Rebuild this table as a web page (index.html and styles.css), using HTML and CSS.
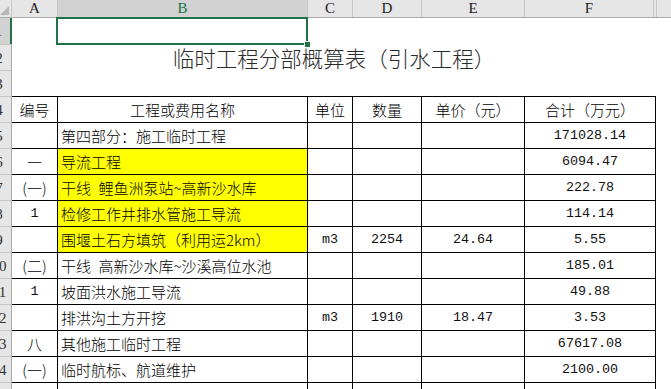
FILE: index.html
```html
<!DOCTYPE html>
<html lang="zh-CN">
<head>
<meta charset="utf-8">
<title>临时工程分部概算表</title>
<link rel="stylesheet" href="styles.css">
</head>
<body>
<div class="sheet">
  <div class="hdr">
    <div class="corner"><svg width="11" height="17" viewBox="0 0 11 17"><polygon points="9,6 9,15 0,15" fill="#b8b8b8"/></svg></div>
    <div class="ch wa">A</div>
    <div class="ch wb on">B</div>
    <div class="ch wc">C</div>
    <div class="ch wd">D</div>
    <div class="ch we">E</div>
    <div class="ch wfh">F</div>
    <div class="ch wg"></div>
    <div class="ch rest"></div>
  </div>

  <div class="row">
    <div class="rh first on"><span>1</span></div>
    <div class="c wa"></div>
    <div class="c wb cur"><div class="selbox"></div><i class="handle"></i></div>
  </div>
  <div class="row">
    <div class="rh"><span>2</span></div>
    <div class="title">临时工程分部概算表（引水工程）</div>
  </div>
  <div class="row">
    <div class="rh"><span>3</span></div>
  </div>

  <div class="row t">
    <div class="rh"><span>4</span></div>
    <div class="c wa ctr">编号</div>
    <div class="c wb ctr">工程或费用名称</div>
    <div class="c wc ctr">单位</div>
    <div class="c wd ctr">数量</div>
    <div class="c we ctr">单价（元）</div>
    <div class="c wf ctr">合计（万元）</div>
  </div>
  <div class="row t">
    <div class="rh"><span>5</span></div>
    <div class="c wa ctr"></div>
    <div class="c wb">第四部分：施工临时工程</div>
    <div class="c wc ctr"></div>
    <div class="c wd ctr"></div>
    <div class="c we ctr"></div>
    <div class="c wf ctr n">171028.14</div>
  </div>
  <div class="row t">
    <div class="rh"><span>6</span></div>
    <div class="c wa ctr">一</div>
    <div class="c wb y">导流工程</div>
    <div class="c wc ctr"></div>
    <div class="c wd ctr"></div>
    <div class="c we ctr"></div>
    <div class="c wf ctr n">6094.47</div>
  </div>
  <div class="row t">
    <div class="rh"><span>7</span></div>
    <div class="c wa ctr">(一)</div>
    <div class="c wb y">干线&ensp;鲤鱼洲泵站~高新沙水库</div>
    <div class="c wc ctr"></div>
    <div class="c wd ctr"></div>
    <div class="c we ctr"></div>
    <div class="c wf ctr n">222.78</div>
  </div>
  <div class="row t">
    <div class="rh"><span>8</span></div>
    <div class="c wa ctr n">1</div>
    <div class="c wb y">检修工作井排水管施工导流</div>
    <div class="c wc ctr"></div>
    <div class="c wd ctr"></div>
    <div class="c we ctr"></div>
    <div class="c wf ctr n">114.14</div>
  </div>
  <div class="row t">
    <div class="rh"><span>9</span></div>
    <div class="c wa ctr"></div>
    <div class="c wb y">围堰土石方填筑（利用运2km）</div>
    <div class="c wc ctr n">m3</div>
    <div class="c wd ctr n">2254</div>
    <div class="c we ctr n">24.64</div>
    <div class="c wf ctr n">5.55</div>
  </div>
  <div class="row t">
    <div class="rh"><span>10</span></div>
    <div class="c wa ctr">(二)</div>
    <div class="c wb">干线&ensp;高新沙水库~沙溪高位水池</div>
    <div class="c wc ctr"></div>
    <div class="c wd ctr"></div>
    <div class="c we ctr"></div>
    <div class="c wf ctr n">185.01</div>
  </div>
  <div class="row t">
    <div class="rh"><span>11</span></div>
    <div class="c wa ctr n">1</div>
    <div class="c wb">坡面洪水施工导流</div>
    <div class="c wc ctr"></div>
    <div class="c wd ctr"></div>
    <div class="c we ctr"></div>
    <div class="c wf ctr n">49.88</div>
  </div>
  <div class="row t">
    <div class="rh"><span>12</span></div>
    <div class="c wa ctr"></div>
    <div class="c wb">排洪沟土方开挖</div>
    <div class="c wc ctr n">m3</div>
    <div class="c wd ctr n">1910</div>
    <div class="c we ctr n">18.47</div>
    <div class="c wf ctr n">3.53</div>
  </div>
  <div class="row t">
    <div class="rh"><span>13</span></div>
    <div class="c wa ctr">八</div>
    <div class="c wb">其他施工临时工程</div>
    <div class="c wc ctr"></div>
    <div class="c wd ctr"></div>
    <div class="c we ctr"></div>
    <div class="c wf ctr n">67617.08</div>
  </div>
  <div class="row t">
    <div class="rh"><span>14</span></div>
    <div class="c wa ctr">(一)</div>
    <div class="c wb">临时航标、航道维护</div>
    <div class="c wc ctr"></div>
    <div class="c wd ctr"></div>
    <div class="c we ctr"></div>
    <div class="c wf ctr n">2100.00</div>
  </div>
  <div class="row t">
    <div class="rh"><span>15</span></div>
    <div class="c wa ctr"></div>
    <div class="c wb"></div>
    <div class="c wc ctr"></div>
    <div class="c wd ctr"></div>
    <div class="c we ctr"></div>
    <div class="c wf ctr"></div>
  </div>
</div>
</body>
</html>
```

FILE: styles.css
```css
html, body {
  margin: 0;
  padding: 0;
  background: #fff;
}
body {
  width: 671px;
  height: 389px;
  overflow: hidden;
  font-family: "Noto Sans CJK SC", sans-serif;
  color: #000;
}
.sheet {
  display: flex;
  flex-direction: column;
  width: 700px;
}

/* column widths */
.wa { width: 46px; }
.wb { width: 250px; }
.wc { width: 45px; }
.wd { width: 69px; }
.we { width: 103px; }
.wf { width: 131px; }
.wfh { width: 129px; }
.wg { width: 3px; }
.rest { flex: 1; }

/* column header */
.hdr {
  display: flex;
  height: 18px;
  box-sizing: border-box;
  background: #e6e6e6;
  border-bottom: 1px solid #ababab;
}
.corner {
  width: 12px;
  flex-shrink: 0;
  box-sizing: border-box;
  border-right: 1px solid #c6c6c6;
  display: flex;
}
.ch {
  flex-shrink: 0;
  box-sizing: border-box;
  border-right: 1px solid #c6c6c6;
  display: flex;
  align-items: center;
  justify-content: center;
  font-family: "Liberation Serif", serif;
  font-size: 15px;
  line-height: 17px;
  color: #222;
}
.ch.rest { flex: 1; border-right: none; }
.ch.on {
  background: #d2d2d2;
  color: #217346;
}

/* rows */
.row {
  display: flex;
  height: 26px;
}
.rh {
  width: 12px;
  flex-shrink: 0;
  box-sizing: border-box;
  background: #e6e6e6;
  border-right: 1px solid #ababab;
  border-top: 1px solid #c6c6c6;
  display: flex;
  justify-content: flex-end;
  align-items: center;
  overflow: hidden;
}
.rh.first { border-top: none; }
.rh.on {
  background: #d2d2d2;
  border-right: 2px solid #217346;
}
.rh span {
  flex-shrink: 0;
  width: 24px;
  text-align: center;
  font-family: "Liberation Serif", serif;
  font-size: 15px;
  line-height: 18px;
  color: #333;
}
.rh.on span { width: 23px; }

.c {
  flex-shrink: 0;
  box-sizing: border-box;
  border-right: 1px solid transparent;
  display: flex;
  align-items: center;
  padding-left: 3px;
  font-size: 15px;
  font-weight: 300;
  white-space: pre;
  overflow: hidden;
}
.c.ctr {
  justify-content: center;
  padding-left: 0;
}
.t .c {
  border-top: 1px solid #000;
  border-right: 1px solid #000;
}
.c.y { background: #ffff00; }
.n {
  font-family: "Liberation Mono", monospace;
  font-size: 13.4px;
  font-weight: 400;
  color: #111;
}

/* title merged cell */
.title {
  width: 644px;
  flex-shrink: 0;
  display: flex;
  align-items: center;
  justify-content: center;
  font-size: 21.5px;
  font-weight: 300;
  color: #2a2a2a;
}

/* selection */
.c.cur {
  position: relative;
  overflow: visible;
}
.selbox {
  position: absolute;
  left: -2px;
  top: -1px;
  right: -1px;
  bottom: -1px;
  border: 2px solid #217346;
}
.handle {
  position: absolute;
  right: -3px;
  bottom: -3px;
  width: 5px;
  height: 5px;
  background: #217346;
  border-left: 1px solid #fff;
  border-top: 1px solid #fff;
}
```
